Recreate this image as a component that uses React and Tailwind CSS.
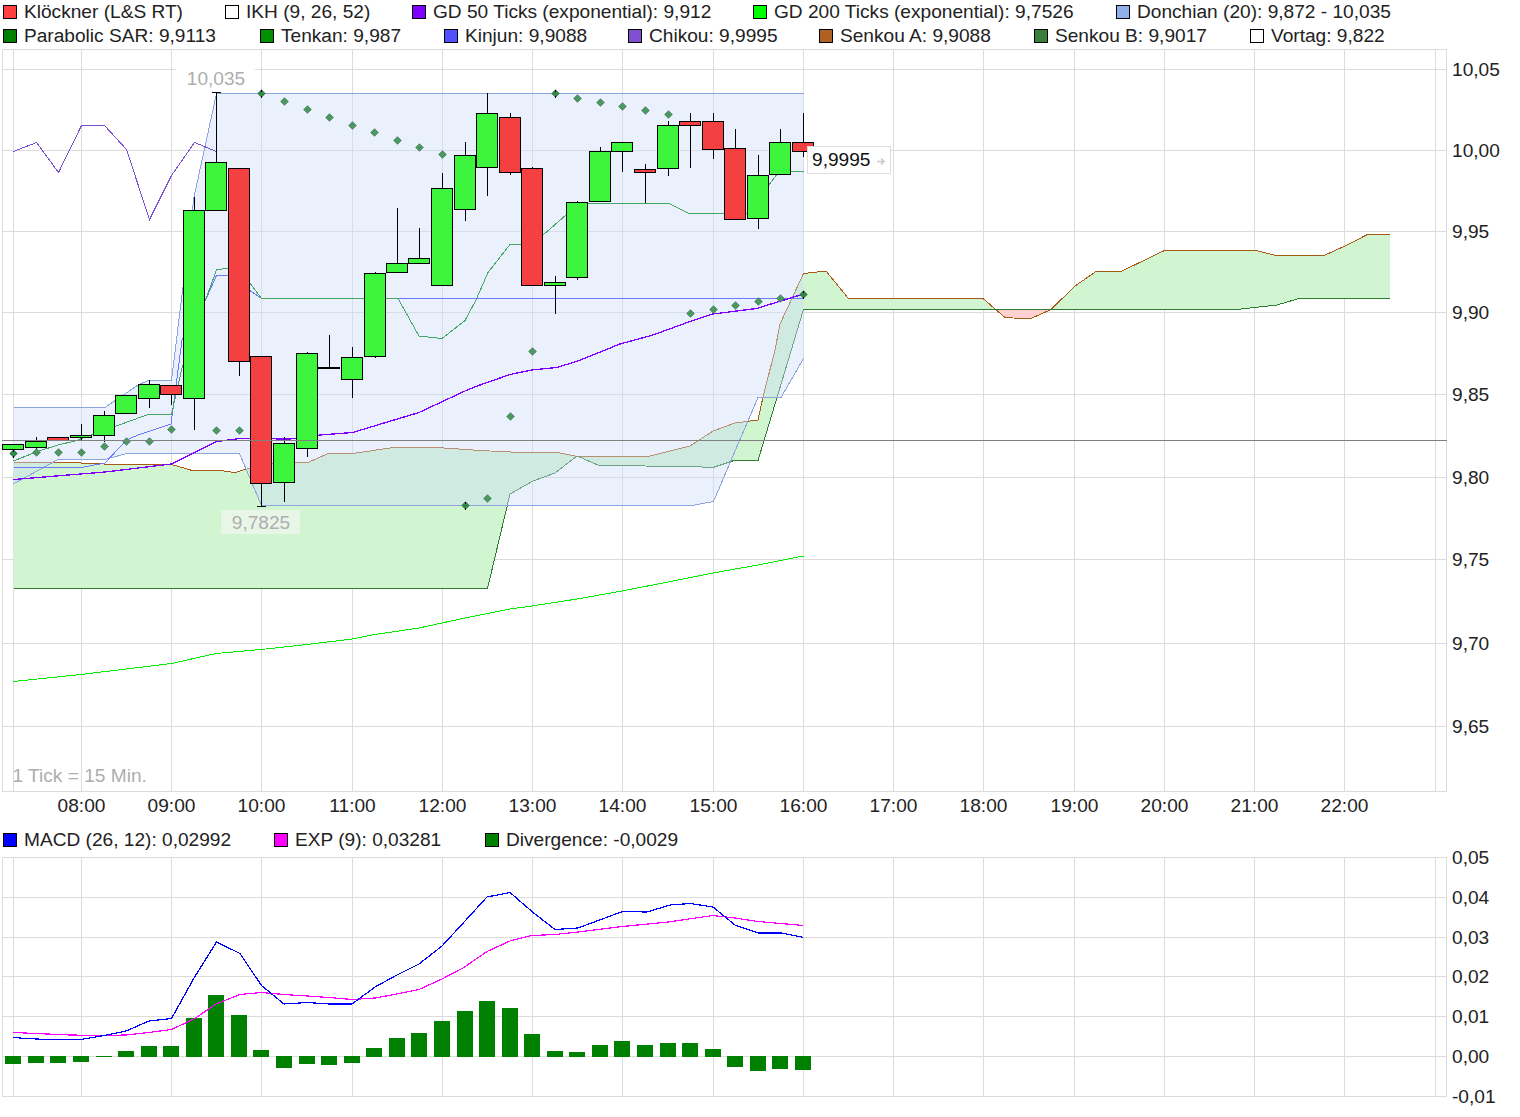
const gridX = [13.5, 81.5, 171.5, 261.5, 352.5, 442.5, 532.5, 622.5, 713.5, 803.5, 893.5, 983.5, 1074.5, 1164.5, 1254.5, 1344.5, 1435.5];
const priceTicks = [[69.5, "10,05"], [150.5, "10,00"], [231.5, "9,95"], [312.5, "9,90"], [394.5, "9,85"], [477.5, "9,80"], [559.5, "9,75"], [643.5, "9,70"], [726.5, "9,65"]];
const macdTicks = [[857.5, "0,05"], [897.5, "0,04"], [937.5, "0,03"], [976.5, "0,02"], [1016.5, "0,01"], [1056.5, "0,00"], [1096.5, "-0,01"]];
const timeTicks = [[81.5, "08:00"], [171.5, "09:00"], [261.5, "10:00"], [352.5, "11:00"], [442.5, "12:00"], [532.5, "13:00"], [622.5, "14:00"], [713.5, "15:00"], [803.5, "16:00"], [893.5, "17:00"], [983.5, "18:00"], [1074.5, "19:00"], [1164.5, "20:00"], [1254.5, "21:00"], [1344.5, "22:00"]];

// x, body top, body bottom, wick top, wick bottom, up
const candles = [
  [13, 444.5, 449.5, 444, 453, 1], [36, 441.5, 447.5, 437, 451, 1], [58, 437.5, 440.5, 437, 441, 0], [81, 435.5, 437.5, 424, 440, 1],
  [104, 415.5, 435.5, 411, 442, 1], [126, 395.5, 413.5, 395, 414, 1], [149, 384.5, 398.5, 380, 408, 1], [171, 385.5, 394.5, 385, 405, 0],
  [194, 210.5, 398.5, 197, 430, 1], [216, 162.5, 210.5, 92, 211, 1], [239, 168.5, 361.5, 168, 376, 0], [261, 356.5, 483.5, 356, 506, 0],
  [284, 443.5, 482.5, 437, 502, 1], [307, 353.5, 448.5, 352, 457, 1], [329, 367.5, 368.5, 335, 369, 1], [352, 357.5, 379.5, 347, 398, 1],
  [375, 273.5, 356.5, 272, 358, 1], [397, 263.5, 272.5, 208, 273, 1], [419, 258.5, 263.5, 228, 264, 1], [442, 188.5, 285.5, 173, 286, 1],
  [465, 155.5, 209.5, 142, 221, 1], [487, 113.5, 167.5, 93, 196, 1], [510, 117.5, 172.5, 113, 175, 0], [532, 168.5, 285.5, 167, 286, 0],
  [555, 282.5, 285.5, 276, 314, 1], [577, 202.5, 277.5, 201, 280, 1], [600, 151.5, 201.5, 147, 202, 1], [622, 142.5, 151.5, 142, 172, 1],
  [645, 169.5, 172.5, 164, 203, 0], [668, 125.5, 168.5, 121, 176, 1], [690, 121.5, 125.5, 113, 168, 0], [713, 121.5, 149.5, 113, 159, 0],
  [735, 148.5, 219.5, 129, 220, 0], [758, 175.5, 218.5, 155, 229, 1], [780, 142.5, 174.5, 129, 175, 1], [803, 142.5, 151.5, 113, 157, 0],
];

const sar = [
  [13.5, 453.5, 1], [36.5, 452.5], [58.5, 452.5], [81.5, 452.5], [104.5, 446.5], [126.5, 441.5], [149.5, 441.5], [171.5, 429.5], [216.5, 430.5], [239.5, 430.5],
  [261.5, 93.5, 1], [284.5, 101.5], [307.5, 109.5], [329.5, 117.5], [352.5, 125.5], [374.5, 132.5], [397.5, 140.5], [419.5, 147.5], [442.5, 154.5],
  [465.5, 505.5, 1], [487.5, 498.5], [510.5, 416.5], [532.5, 351.5], [555.5, 93.5, 1], [577.5, 98.5], [600.5, 102.5], [622.5, 106.5], [645.5, 110.5], [668.5, 114.5],
  [690.5, 313.5], [713.5, 309.5], [735.5, 305.5], [758.5, 301.5], [780.5, 298.5], [803.5, 294.5, 1],
];

// bar x, top of bar (zero line sits at 1056.5)
const divergence = [
  [13, 1063], [36, 1062], [58, 1062], [81, 1061], [104, 1056], [126, 1051], [149, 1046], [171, 1046], [194, 1018], [216, 995], [239, 1015], [261, 1050],
  [284, 1067], [307, 1063], [329, 1064], [352, 1062], [374, 1048], [397, 1038], [419, 1033], [442, 1021], [465, 1011], [487, 1001], [510, 1008], [532, 1034],
  [555, 1051], [577, 1052], [600, 1045], [622, 1041], [645, 1045], [668, 1043], [690, 1043], [713, 1049], [735, 1066], [758, 1070], [780, 1068], [803, 1069],
];

const donchianTop = "13.5,407.5 105,407.5 138,385 148,380.5 171.5,380.5 194,197 216.5,93.5 803.5,93.5";
const donchianBottom = "13.5,484 58,459.5 105,459.5 126.5,453.5 239.5,453.5 261.5,505.5 692,505.5 713.5,501.5 758,397.5 781,397.5 803.5,358.5";
const donchianFill = donchianTop + " " + donchianBottom.split(" ").reverse().join(" ");

const senkouA = "13.5,462.5 70,462.5 115,464.5 171.5,464.5 194,471 216,470 235,472.5 250,468 261,464.5 296,462.5 308,462.5 328,453.5 353,453.5 393,447.5 437,447.5 480,450.5 521,452.5 558,452.5 577,456.5 648,456.5 690,446 713,431 735,423 758,420 763,397 775,350 780,324 803.5,273.5 826,271 848.5,298.5 983,298.5 1005,317.5 1030,319 1051,309.5 1075,286 1096,271.5 1121,271.5 1164.5,250.5 1256,250.5 1276,255.5 1324,255.5 1345,246 1367.5,234.5 1390,234.5";
const senkouB = "13.5,588.5 487.5,588.5 510,494 533,481 555,473 577,456 599,465.5 690,466.5 713,467.5 734,460.5 758,460.5 803.5,309.5 1237,309.5 1277,305 1299,298.5 1390,298.5";
const cloudFill = senkouA + " " + senkouB.split(" ").reverse().join(" ");

const chikou = "13.5,151.5 36.5,142.5 58.5,172.5 81.5,125.5 104.5,125.5 126.5,149.5 149.5,219.5 171.5,175.5 194.5,142.5 216.5,151.5";
const tenkan = "13.5,461 36,452 58,445 75,441 115,426.5 148,414.5 171.5,414.5 182,368 205.5,300 216.5,270 228,268 250,283 261.5,298.5 398,298.5 419,336 442,338.5 465,320.5 476,300 488,272.5 510,244.5 532,244.5 543,235 566,215 588,203.5 669,203.5 689,213.5 746.5,213.5 769,185 776.5,175 791,171.5 803.5,171.5";
const kinjun = "13.5,467.5 81,467.5 105,463 126.5,440 138,435 171,424 182,340 205.5,300 216.5,275.5 228,275.5 261.5,298.5 803.5,298.5";
const gd50 = "13.5,479.5 105,472 171.5,464 216.5,441.5 240,438.5 290,439 320,435 352.5,432.5 419,412.5 465,391 480,385 510,374.5 532,370 556.5,367.5 576.5,361.5 620,344 653,335 690,321.5 713,314 756.5,308.5 803.5,294";
const gd200 = "13.5,681.5 81,674.5 171.5,663.5 216,653.5 261,649.5 307,644.5 352,639 375,634.5 419,628 465,618 510,609 532,606 577,599 622,591 668,582 713,573 758,565 803.5,556";
const macdLine = "13.5,1037.5 26,1038.5 48,1039.5 81,1039.5 104,1035.5 126,1031 149,1021 171.5,1018.5 194,978 216.5,942 240,953.5 261.5,985.5 284,1004 307,1002.5 329,1004 352,1004 375,987 397,975 419,964 442,946 465,921 487,897 510,892.5 532.5,912 555,929.5 578,928 622.5,911.5 647,912 670,905 690,903.5 713,907 735,925 758,933 781.5,933 803.5,937.5";
const expLine = "13.5,1032.5 36,1033.5 70,1035 104,1035.5 126,1035 149,1032.5 171.5,1029.5 194,1019 216,1004 240,994.5 261.5,992.5 284,994.5 307,996 329,997.5 352,999.5 375,998 397,994 419,989.5 442,979 463,968 487,951.5 510,941 532,935.5 555,934.5 578,932 622.5,926.5 668,922 713,915.5 735,918 758,921.5 803.5,925.5";

const row1 = [
  ["bg-[#ff4040]", "Klöckner (L&S RT)"],
  ["bg-white", "IKH (9, 26, 52)"],
  ["bg-[#7f00ff]", "GD 50 Ticks (exponential): 9,912"],
  ["bg-[#00ff00]", "GD 200 Ticks (exponential): 9,7526"],
  ["bg-[#8fb0e8]", "Donchian (20): 9,872 - 10,035"],
];
const row2 = [
  ["bg-[#008000]", "Parabolic SAR: 9,9113"],
  ["bg-[#009000]", "Tenkan: 9,987"],
  ["bg-[#5050ff]", "Kinjun: 9,9088"],
  ["bg-[#8050d0]", "Chikou: 9,9995"],
  ["bg-[#b06020]", "Senkou A: 9,9088"],
  ["bg-[#3a7f3a]", "Senkou B: 9,9017"],
  ["bg-white", "Vortag: 9,822"],
];
const row3 = [
  ["bg-[#0000ff]", "MACD (26, 12): 0,02992"],
  ["bg-[#ff00ff]", "EXP (9): 0,03281"],
  ["bg-[#008000]", "Divergence: -0,0029"],
];

const LegendRow = ({ items, columns }) => (
  <div className={`grid h-6 items-center pl-[3px] ${columns}`}>
    {items.map(([color, label]) => (
      <div key={label} className="flex items-center gap-[7px] whitespace-nowrap">
        <span className={`h-[14px] w-[14px] border border-black ${color}`}></span>
        <span>{label}</span>
      </div>
    ))}
  </div>
);

const Line = ({ points, color, width = 1 }) => (
  <polyline points={points} fill="none" stroke={color} strokeWidth={width} shapeRendering="crispEdges" />
);

const Grid = ({ top, bottom, ticks }) => (
  <g stroke="#dcdcdc" strokeWidth="1" shapeRendering="crispEdges">
    {ticks.map(([y]) => <line key={y} x1="2" x2="1447" y1={y} y2={y} />)}
    {gridX.map((x) => <line key={x} x1={x} x2={x} y1={top} y2={bottom} />)}
    <rect x="2.5" y={top} width="1444" height={bottom - top} fill="none" />
  </g>
);

const AxisLabels = ({ ticks }) => (
  <g fill="#222">
    {ticks.map(([y, label]) => (
      <text key={label} x="1452" y={y + 6.5}>{label}</text>
    ))}
  </g>
);

const Candle = ({ c }) => {
  const [x, top, bottom, wickTop, wickBottom, up] = c;
  return (
    <g shapeRendering="crispEdges">
      <line x1={x + 0.5} x2={x + 0.5} y1={wickTop} y2={wickBottom} stroke="black" />
      <rect x={x - 10.5} y={top} width="21" height={bottom - top} fill={up ? "#3ef53e" : "#f44040"} stroke="black" />
    </g>
  );
};

const Diamond = ({ d }) => {
  const [x, y, dark] = d;
  return (
    <g>
      <polygon
        points={`${x},${y - 3.8} ${x + 3.8},${y} ${x},${y + 3.8} ${x - 3.8},${y}`}
        fill={dark ? "#2d8a42" : "#4a9a60"}
        stroke="#3a6a50"
        strokeWidth="0.7"
      />
      {dark && <line x1={x} x2={x} y1={y - 4} y2={y + 4} stroke="black" strokeDasharray="2 4 2" shapeRendering="crispEdges" />}
    </g>
  );
};

const PriceChart = () => (
  <svg viewBox="0 48 1520 770" className="block h-[770px] w-[1520px] text-[19.13px]">
    <Grid top={49.5} bottom={791.5} ticks={priceTicks} />
    <polygon points={cloudFill} fill="#d0f5d0" />
    <polygon points="996,309.5 1005,317.5 1030,319 1051,309.5" fill="#ffd0d0" />
    <Line points={senkouA} color="#a85a14" />
    <Line points={senkouB} color="#2e7d32" />
    <polygon points={donchianFill} fill="#cedcf8" fillOpacity="0.42" />
    <Line points={donchianTop} color="#8ea4e0" />
    <Line points={donchianBottom} color="#8ea4e0" />
    <Line points={chikou} color="#7a4fd0" />
    <Line points={kinjun} color="#6b78ff" />
    <Line points={tenkan} color="#45a862" />
    <Line points={gd50} color="#8000ff" width={1.3} />
    <Line points={gd200} color="#00ee00" />
    {candles.map((c) => <Candle key={c[0]} c={c} />)}
    {sar.map((d) => <Diamond key={d[0]} d={d} />)}
    <line x1="212" x2="221" y1="92.5" y2="92.5" stroke="black" shapeRendering="crispEdges" />
    <line x1="257" x2="266" y1="506.5" y2="506.5" stroke="black" shapeRendering="crispEdges" />
    <line x1="2" x2="1447" y1="440.5" y2="440.5" stroke="#808080" shapeRendering="crispEdges" />

    <rect x="176" y="68" width="79" height="23" fill="white" />
    <text x="216" y="85" textAnchor="middle" fill="#aeaeae">10,035</text>
    <rect x="221" y="510" width="79" height="24" fill="#e8f6e8" />
    <text x="261" y="529" textAnchor="middle" fill="#aeaeae">9,7825</text>

    <rect x="807.5" y="146.5" width="83" height="27" fill="white" stroke="#dddddd" shapeRendering="crispEdges" />
    <text x="812" y="165.5" fill="#111">9,9995</text>
    <path d="M877 161.5h6M881 158.5l3 3-3 3" fill="none" stroke="#c8c8c8" strokeWidth="1.5" />

    <text x="12.5" y="782" fill="#aeaeae">1 Tick = 15 Min.</text>
    <AxisLabels ticks={priceTicks} />
    <g fill="#222" textAnchor="middle">
      {timeTicks.map(([x, label]) => <text key={label} x={x} y="812">{label}</text>)}
    </g>
  </svg>
);

const MacdChart = () => (
  <svg viewBox="0 849 1520 268" className="block h-[268px] w-[1520px] overflow-visible text-[19.13px]">
    <Grid top={857.5} bottom={1096.5} ticks={macdTicks} />
    {divergence.map(([x, y]) => (
      <rect
        key={x}
        x={x - 8}
        y={Math.min(y, 1056)}
        width="16"
        height={Math.abs(y - 1056) + 1}
        fill="#008000"
        shapeRendering="crispEdges"
      />
    ))}
    <Line points={expLine} color="#ff00ff" width={1.2} />
    <Line points={macdLine} color="#0000ff" width={1.2} />
    <AxisLabels ticks={macdTicks} />
  </svg>
);

const App = () => {
  return (
    <div className="h-[1117px] w-[1520px] overflow-hidden bg-white font-['Liberation_Sans',Arial,sans-serif] text-[19.13px] leading-6 text-[#222]">
      <LegendRow items={row1} columns="grid-cols-[222px_187px_341px_363px_1fr]" />
      <LegendRow items={row2} columns="grid-cols-[257px_184px_184px_191px_215px_216px_1fr]" />
      <PriceChart />
      <div className="mt-[13px] flex h-[18px] flex-col justify-center">
        <LegendRow items={row3} columns="grid-cols-[271px_211px_1fr]" />
      </div>
      <MacdChart />
    </div>
  );
};

export default App;
